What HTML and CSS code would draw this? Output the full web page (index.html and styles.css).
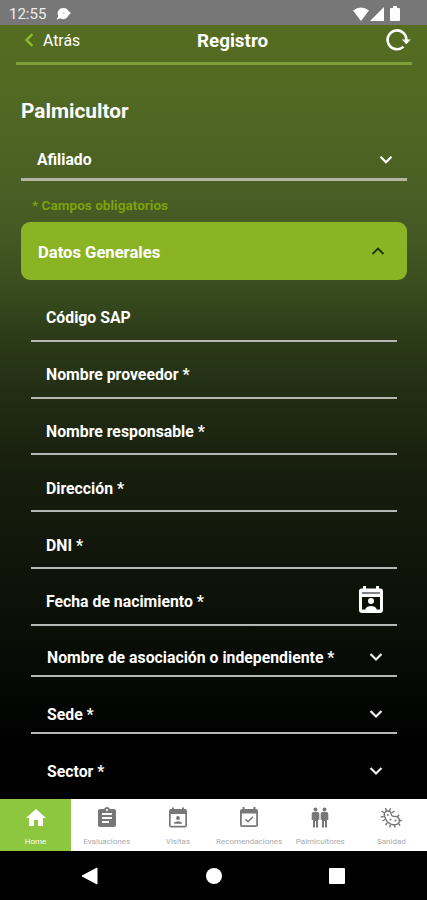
FILE: index.html
```html
<!DOCTYPE html>
<html lang="es">
<head>
  <meta charset="UTF-8" />
  <meta name="viewport" content="width=device-width, initial-scale=1.0"/>
  <title>Registro</title>
  <link rel="stylesheet" href="styles.css">
</head>
<body>

<div class="status-bar">
  <span class="time">12:55</span>
  <svg class="chat" width="16" height="14" viewBox="0 0 16 14"><path d="M7.500 1a5.400 5.400 0 0 1 5 3L15 6l-2.300 2A5.500 5.500 0 0 1 4.500 11.300L.5 12.800 2.300 9A5.400 5.400 0 0 1 7.500 1z" fill="#fff"/><circle cx="7.500" cy="6.200" r="1" fill="#ccc"/></svg>
  <div class="signals">
    <svg width="16" height="14" viewBox="0 0 16 14"><path d="M0 3.500Q8-2.500 16 3.500L8 14z" fill="#fff"/></svg>
    <svg width="14" height="14" viewBox="0 0 14 14"><path d="M14 0V14H0z" fill="#fff"/></svg>
    <svg class="battery" width="10" height="15" viewBox="0 0 10 15"><path d="M3 0h4v2h2q1 0 1 1v11q0 1-1 1H1q-1 0-1-1V3q0-1 1-1h2z" fill="#fff"/></svg>
  </div>
</div>

<div class="screen">
  <header>
    <a class="back">
      <svg width="10" height="14" viewBox="0 0 10 14"><path d="M8.500 1L2.500 7l6 6" fill="none" stroke="#8fb92f" stroke-width="2.400"/></svg>
      <span>Atrás</span>
    </a>
    <h1>Registro</h1>
    <svg class="refresh" width="25" height="22" viewBox="0 0 25 22"><path d="M17.500 17.600A9.400 9.400 0 1 1 20.400 11" fill="none" stroke="#fff" stroke-width="2.600"/><path d="M15.800 10.500h9l-4.500 4.700z" fill="#fff"/></svg>
  </header>

  <main>
    <h2>Palmicultor</h2>

    <div class="select">
      <span>Afiliado</span>
      <svg width="14" height="10" viewBox="0 0 14 10"><path d="M1.500 1.800L7 7.300l5.500-5.500" fill="none" stroke="#fff" stroke-width="2.200"/></svg>
    </div>

    <p class="note">* Campos obligatorios</p>

    <div class="panel">
      <span>Datos Generales</span>
      <svg width="14" height="10" viewBox="0 0 14 10"><path d="M1.500 7L7 1.500 12.500 7" fill="none" stroke="#1e3409" stroke-width="1.800"/></svg>
    </div>

    <form class="fields">
      <div class="field"><label>Código SAP</label></div>
      <div class="field"><label>Nombre proveedor *</label></div>
      <div class="field"><label>Nombre responsable *</label></div>
      <div class="field"><label>Dirección *</label></div>
      <div class="field"><label>DNI *</label></div>
      <div class="field date">
        <label>Fecha de nacimiento *</label>
        <svg width="26" height="28" viewBox="0 0 26 28"><path fill="#fff" fill-rule="evenodd" d="M5 0h3v2.500h10V0h3v2.500h1.500q2.500 0 2.500 2.500v19q0 3-3 3H4q-3 0-3-3V5q0-2.500 2.500-2.500H5zM4 11v12.500h18V11z"/><path d="M4 7h18" stroke="#777" stroke-width="1.800"/><circle cx="13" cy="15" r="3" fill="#fff"/><path d="M7.500 24v-1.200Q9 20 13 20t5.500 2.800V24z" fill="#fff"/></svg>
      </div>
      <div class="field combo short">
        <label>Nombre de asociación o independiente *</label>
        <svg width="14" height="10" viewBox="0 0 14 10"><path d="M1.500 2L7 7.500 12.500 2" fill="none" stroke="#eee" stroke-width="2.200"/></svg>
      </div>
      <div class="field combo">
        <label>Sede *</label>
        <svg width="14" height="10" viewBox="0 0 14 10"><path d="M1.500 2L7 7.500 12.500 2" fill="none" stroke="#eee" stroke-width="2.200"/></svg>
      </div>
      <div class="field combo last">
        <label>Sector *</label>
        <svg width="14" height="10" viewBox="0 0 14 10"><path d="M1.500 2L7 7.500 12.500 2" fill="none" stroke="#eee" stroke-width="2.200"/></svg>
      </div>
    </form>
  </main>
</div>

<nav class="tabs">
  <a class="tab active">
    <svg width="22" height="24" viewBox="1 0 22 24"><path d="M10 20v-6h4v6h5v-8h3L12 3 2 12h3v8z" fill="#fff"/></svg>
    <span>Home</span>
  </a>
  <a class="tab">
    <svg width="24" height="24" viewBox="0 0 24 24"><path fill="#777" d="M19 3h-4.180C14.400 1.840 13.300 1 12 1s-2.400.84-2.820 2H5c-1.100 0-2 .9-2 2v14c0 1.100.9 2 2 2h14c1.100 0 2-.9 2-2V5c0-1.100-.9-2-2-2zm-7 0c.55 0 1 .45 1 1s-.45 1-1 1-1-.45-1-1 .45-1 1-1zm2 14H7v-2h7v2zm3-4H7v-2h10v2zm0-4H7V7h10v2z"/></svg>
    <span>Evaluaciones</span>
  </a>
  <a class="tab">
    <svg width="24" height="24" viewBox="0 0 24 24"><path fill="#777" fill-rule="evenodd" d="M6 1.500h2V3h8V1.500h2V3h1q2 0 2 2v14.500q0 2-2 2H5q-2 0-2-2V5q0-2 2-2h1zM4.700 8v11.800h14.600V8z"/><circle cx="12" cy="12" r="1.900" fill="#777"/><path d="M8 17.800v-1q1-1.600 4-1.600t4 1.600v1z" fill="#777"/></svg>
    <span>Visitas</span>
  </a>
  <a class="tab">
    <svg width="24" height="24" viewBox="0 0 24 24"><path fill="#777" fill-rule="evenodd" d="M5.500 1h2v2h9V1h2v2h.5q2 0 2 2v14q0 2-2 2H5q-2 0-2-2V5q0-2 2-2h.500zM4.800 7.500v11.700h14.400V7.500z"/><path d="M8.500 13.200l2.500 2.500 5-5" fill="none" stroke="#777" stroke-width="1.600"/></svg>
    <span>Recomendaciones</span>
  </a>
  <a class="tab">
    <svg width="24" height="24" viewBox="0 0 24 24"><g fill="#777"><circle cx="7.500" cy="3.500" r="2"/><path d="M5.500 6h4q1.800 0 1.800 2v6H10v7.500H8V15H7v6.500H5V14H3.700V8q0-2 1.800-2z"/><circle cx="16.500" cy="3.500" r="2"/><path d="M14.500 6h4q1.800 0 1.800 2v6H19v7.500h-2V15h-1v6.500h-2V14h-1.300V8q0-2 1.800-2z"/></g></svg>
    <span>Palmicultores</span>
  </a>
  <a class="tab">
    <svg width="24" height="24" viewBox="0 0 24 24"><g fill="none" stroke="#777" stroke-width="1.400"><path d="M5.500 7C7 4 11.500 4.500 12 7.500s2 3 5 3 5 5.500 1.500 7.500-9 0-11-3.500S4.500 9.500 5.500 7z"/><path d="M5.500 7L2.500 5M7.500 5L6.500 2M10.500 5l1-2.800M12.500 7l3-2M4.800 10.500l-3 .5M6 13.500L3.500 15M8.500 16.500l-2 2.500M11.500 18.500l-1 2.700M15.500 19l.5 2.700M19.500 17.500l1.500 2M20.500 14.500h2.300M18.500 11l1.500-2.300"/></g><g fill="#777"><circle cx="8.800" cy="9" r="1"/><circle cx="11.500" cy="13.500" r="1"/><circle cx="16.500" cy="14.500" r="1"/></g></svg>
    <span>Sanidad</span>
  </a>
</nav>

<div class="system-bar">
  <svg width="17" height="18" viewBox="0 0 17 18"><path d="M16 1v16L1 9z" fill="#fff" stroke="#fff" stroke-linejoin="round"/></svg>
  <span class="circle"></span>
  <span class="square"></span>
</div>

</body>
</html>
```
FILE: styles.css
```css
* {
  box-sizing: border-box;
}

body {
  margin: 0;
  height: 900px;
  overflow: hidden;
  display: flex;
  flex-direction: column;
  font-family: Roboto, sans-serif;
  background: #000;
  color: #fff;
}

svg {
  display: block;
  flex: none;
}

.status-bar {
  height: 25px;
  flex: none;
  display: flex;
  align-items: center;
  padding: 2px 27px 0 9px;
  background: #777;
}

.time {
  font-size: 15px;
  color: #eee;
}

.chat {
  margin-left: 10px;
}

.signals {
  margin-left: auto;
  display: flex;
  align-items: center;
  gap: 1px;
}

.battery {
  margin-left: 5px;
}

.screen {
  height: 774px;
  flex: none;
  overflow: hidden;
  background: linear-gradient(#556d20 0, #516823 80px, #4b6124 150px, #435824 215px, #374a1c 270px, #2a3918 320px, #202b13 380px, #171e0d 450px, #10150a 540px, #090d06 620px, #030503 680px, #000 730px);
}

header {
  height: 40px;
  margin: 0 15px 0 16px;
  padding: 0 1px 7px 8px;
  display: flex;
  align-items: center;
  border-bottom: 3px solid #7da038;
}

.back {
  width: 173px;
  display: flex;
  align-items: center;
  gap: 9px;
  font-size: 15.8px;
}

header h1 {
  margin: 1px 0 0;
  font-size: 18.8px;
  line-height: 28px;
}

.refresh {
  margin: -1px 0 0 auto;
}

main {
  padding: 0 20px 0 21px;
}

h2 {
  margin: 32px 0 0;
  font-size: 20.8px;
  line-height: 28px;
}

.select {
  height: 56px;
  padding: 16px 14px 0 16px;
  display: flex;
  justify-content: space-between;
  align-items: center;
  border-bottom: 3px solid #b3b7a2;
  font-size: 15.7px;
  font-weight: bold;
}

.note {
  margin: 15px 0 8px 11px;
  font-size: 13.6px;
  line-height: 18px;
  font-weight: bold;
  color: #7ca20c;
}

.panel {
  height: 58px;
  padding: 2px 22px 0 17px;
  display: flex;
  justify-content: space-between;
  align-items: center;
  border-radius: 9px;
  background: #8bb425;
  font-size: 16.6px;
  font-weight: bold;
}

.fields {
  margin: 5px 10px 0;
}

.field {
  height: 56.8px;
  padding: 11px 13px 0 15px;
  display: flex;
  justify-content: space-between;
  align-items: center;
  border-bottom: 2px solid #b5b8b5;
  font-size: 15.8px;
  font-weight: bold;
}

.date svg {
  margin-top: -4px;
}

.combo {
  padding: 18.5px 14px 0 16px;
}

.short {
  height: 51.6px;
  padding-top: 13px;
}

.last {
  border-bottom: none;
  padding-top: 17.5px;
}

.tabs {
  height: 52px;
  flex: none;
  display: grid;
  grid-template-columns: repeat(6, 1fr);
  background: #fff;
}

.tab {
  display: flex;
  flex-direction: column;
  align-items: center;
  padding-top: 7px;
  font-size: 8px;
  line-height: 10px;
  color: #aaa;
}

.tab span {
  margin-top: 7px;
}

.active {
  background: #8dc63f;
  color: #fff;
}

.system-bar {
  flex: 1;
  display: flex;
  justify-content: space-between;
  align-items: center;
  padding: 0 82px 0 81px;
}

.circle {
  width: 16px;
  height: 16px;
  border-radius: 50%;
  background: #fff;
}

.square {
  width: 16px;
  height: 16px;
  border-radius: 1px;
  background: #fff;
}
```
